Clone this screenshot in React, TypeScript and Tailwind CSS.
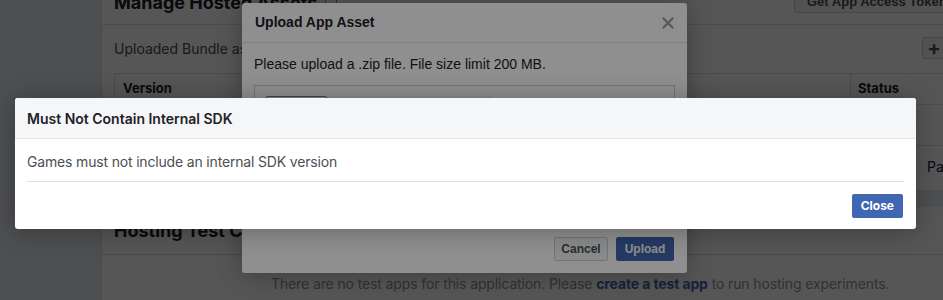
import React from "react";

const CloseX: React.FC = () => (
  <svg width="12" height="12" viewBox="0 0 12 12" className="text-[#9b9b9b]">
    <path d="M1.5 1.5 L10.5 10.5 M10.5 1.5 L1.5 10.5" stroke="currentColor" strokeWidth="2.2" strokeLinecap="round" />
  </svg>
);

export default function App() {
  return (
    <div className="relative w-[943px] h-[300px] overflow-hidden bg-[#e9ebee] font-['Inter',sans-serif]">
      {/* page underneath */}
      <div className="flex h-full">
        <div className="w-[101px] shrink-0" />
        <div className="w-[960px] shrink-0 flex flex-col">
          {/* Manage Hosted Assets card */}
          <div className="-mt-[20px] h-[210px] shrink-0 bg-white border-l border-[#dddfe2]">
            <div className="flex items-center h-[45px] border-b border-[#dddfe2] pl-3">
              <div className="w-[680px] shrink-0 flex items-center gap-2">
                <span className="text-[18px] font-bold text-[#1d2129]">Manage Hosted Assets</span>
                <span className="w-[12px] h-[12px] border border-[#90949c] rounded-[2px]" />
              </div>
              <button className="h-[22px] px-3 border border-[#ccd0d5] rounded-[2px] bg-[#f5f6f7] font-['Liberation_Sans',Arial,sans-serif] text-[13px] font-bold text-[#4b4f56] whitespace-nowrap">
                Get App Access Token
              </button>
            </div>
            <div className="flex items-center h-[22px] mt-[12px] pl-3">
              <span className="w-[808px] shrink-0 text-[14px] text-[#4b4f56]">Uploaded Bundle assets</span>
              <button className="w-[24px] h-[22px] border border-[#ccd0d5] rounded-[2px] bg-[#f5f6f7] flex items-center justify-center text-[20px] leading-none text-[#4b4f56] font-bold">
                +
              </button>
            </div>
            <div className="ml-3 mt-[14px] border-t border-l border-[#dddfe2]">
              <div className="flex h-[31px] border-b border-[#dddfe2]">
                <div className="w-[736px] shrink-0 flex items-center pl-2 border-r border-[#dddfe2] text-[13px] font-bold text-[#1d2129]">
                  Version
                </div>
                <div className="flex items-center pl-[7px] text-[13px] font-bold text-[#1d2129]">Status</div>
              </div>
              <div className="flex h-[41px] border-b border-[#dddfe2]">
                <div className="w-[736px] shrink-0 border-r border-[#dddfe2]" />
                <div />
              </div>
              <div className="flex h-[40px]">
                <div className="w-[736px] shrink-0 border-r border-[#dddfe2]" />
                <div className="flex items-center pl-[76px] text-[14px] text-[#1d2129]">Page</div>
              </div>
            </div>
          </div>

          {/* Hosting Test Cases card */}
          <div className="mt-[17px] flex-1 bg-white border-l border-[#dddfe2]">
            <div className="flex items-center h-[48px] border-b border-[#dddfe2] pl-3">
              <span className="text-[18px] font-bold text-[#1d2129]">Hosting Test Cases</span>
            </div>
            <p className="pl-[169px] pt-[19px] text-[14px] leading-[20px] tracking-[-0.12px] text-[#90949c] whitespace-nowrap">
              There are no test apps for this application. Please{" "}
              <span className="font-bold text-[#4267b2]">create a test app</span> to run hosting experiments.
            </p>
          </div>
        </div>
      </div>

      {/* first overlay */}
      <div className="absolute inset-0 bg-black/40" />

      {/* Upload App Asset dialog */}
      <div className="absolute left-[242px] top-[3px] w-[445px] h-[270px] bg-white rounded-[3px] shadow-[0_2px_26px_rgba(0,0,0,0.3)] flex flex-col font-['Liberation_Sans',Arial,sans-serif]">
        <div className="h-[40px] shrink-0 flex items-center justify-between pl-[13px] pr-[13px] border-b border-[#e5e5e5]">
          <span className="text-[14px] font-bold text-[#1d2129]">Upload App Asset</span>
          <CloseX />
        </div>
        <div className="flex-1 px-3 pt-[11px]">
          <p className="text-[14px] leading-[20px] text-[#1d2129]">
            Please upload a .zip file. File size limit 200 MB.
          </p>
          <div className="mt-[11px] h-[110px] border border-[#ccd0d5] p-[10px]">
            <div className="flex h-[24px]">
              <div className="w-[63px] border border-[#767676] rounded-[3px] bg-[#efefef]" />
              <div className="w-[164px] bg-[#f4f4f4]" />
            </div>
          </div>
        </div>
        <div className="flex justify-end gap-[8px] pr-[13px] pb-[12px]">
          <button className="h-[24px] w-[54px] border border-[#ccd0d5] rounded-[2px] bg-[#f5f6f7] text-[12px] font-bold text-[#4b4f56]">
            Cancel
          </button>
          <button className="h-[24px] w-[58px] border border-[#4267b2] rounded-[2px] bg-[#4267b2] text-[12px] font-bold text-white">
            Upload
          </button>
        </div>
      </div>

      {/* second overlay */}
      <div className="absolute inset-0 bg-black/[0.44]" />

      {/* Must Not Contain Internal SDK dialog */}
      <div className="absolute left-[15px] top-[98px] w-[901px] h-[131px] bg-white rounded-[3px] shadow-[0_2px_26px_rgba(0,0,0,0.3)] flex flex-col">
        <div className="h-[41px] shrink-0 flex items-center px-3 bg-[#f5f6f7] border-b border-[#e5e5e5] rounded-t-[3px]">
          <span className="text-[14px] font-semibold text-[#1d2129]">Must Not Contain Internal SDK</span>
        </div>
        <div className="mx-3 pt-[13px] pb-[9px] border-b border-[#dddfe2]">
          <p className="text-[14px] leading-[20px] tracking-[-0.17px] text-[#4b4f56]">
            Games must not include an internal SDK version
          </p>
        </div>
        <div className="flex justify-end pt-[12px] pr-[13px]">
          <button className="h-[24px] px-[9px] rounded-[2px] bg-[#4267b2] text-[12px] font-bold text-white">
            Close
          </button>
        </div>
      </div>
    </div>
  );
}
